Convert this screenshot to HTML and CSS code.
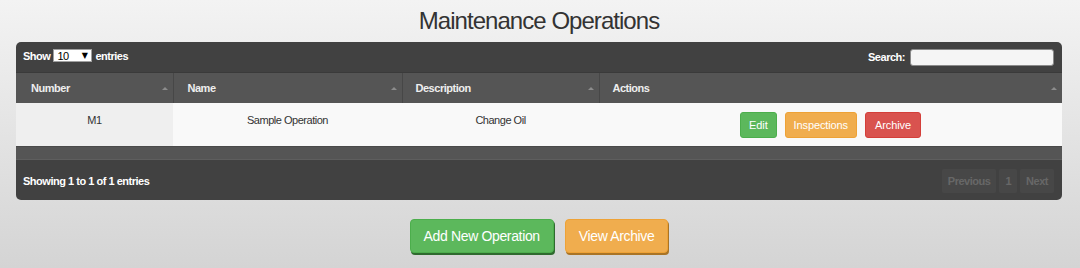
FILE: index.html
```html
<!DOCTYPE html>
<html lang="en">
<head>
<meta charset="utf-8">
<title>Maintenance Operations</title>
<link rel="stylesheet" href="styles.css">
</head>
<body>
<main class="page">
  <h1 class="title">Maintenance Operations</h1>
  <section class="panel">
    <div class="toolbar toolbar-top">
      <div class="length">Show <span class="select"><span>10</span><span class="caret">▼</span></span> entries</div>
      <label class="search">Search: <input type="text" class="search-input"></label>
    </div>
    <table class="grid">
      <colgroup>
        <col class="c1"><col class="c2"><col class="c3"><col class="c4">
      </colgroup>
      <thead>
        <tr>
          <th><span class="th-in">Number<i class="sort"></i></span></th>
          <th><span class="th-in">Name<i class="sort"></i></span></th>
          <th><span class="th-in">Description<i class="sort"></i></span></th>
          <th><span class="th-in">Actions<i class="sort"></i></span></th>
        </tr>
      </thead>
      <tbody>
        <tr>
          <td class="sorted">M1</td>
          <td>Sample Operation</td>
          <td>Change Oil</td>
          <td class="act">
            <div class="btn-row">
              <button class="btn btn-green">Edit</button>
              <button class="btn btn-orange">Inspections</button>
              <button class="btn btn-red">Archive</button>
            </div>
          </td>
        </tr>
      </tbody>
      <tfoot>
        <tr><td colspan="4" class="foot"></td></tr>
      </tfoot>
    </table>
    <div class="toolbar toolbar-bottom">
      <div class="info">Showing 1 to 1 of 1 entries</div>
      <div class="pager">
        <span class="pg">Previous</span>
        <span class="pg">1</span>
        <span class="pg">Next</span>
      </div>
    </div>
  </section>
  <div class="bottom-actions">
    <button class="big big-green">Add New Operation</button>
    <button class="big big-orange">View Archive</button>
  </div>
</main>
</body>
</html>
```

FILE: styles.css
```css
html, body {
  margin: 0;
  padding: 0;
}
body {
  width: 1080px;
  height: 268px;
  overflow: hidden;
  background: linear-gradient(#f3f3f3, #d4d4d4);
  font-family: "Liberation Sans", Arial, sans-serif;
  letter-spacing: -0.03em;
  color: #333;
}
.page {
  padding: 7px 18px 0 16px;
}
.title {
  margin: 0 0 7px;
  font-size: 24px;
  line-height: 28px;
  font-weight: normal;
  letter-spacing: -0.04em;
  text-align: center;
  color: #333;
}
.panel {
  background: #414141;
  border-radius: 5px;
}
.toolbar {
  display: flex;
  align-items: center;
  justify-content: space-between;
  color: #fff;
  font-size: 11px;
  font-weight: bold;
}
.toolbar-top {
  height: 30px;
  padding: 0 8px 0 7px;
  border-bottom: 1px solid #3a3a3a;
  border-radius: 5px 5px 0 0;
}
.length {
  display: flex;
  align-items: center;
  gap: 3px;
  margin-top: -3px;
}
.select {
  display: inline-flex;
  align-items: center;
  justify-content: space-between;
  box-sizing: border-box;
  width: 39px;
  height: 13px;
  padding: 0 4px 0 3px;
  background: #fff;
  border: 1px solid #a0a0a0;
  color: #000;
  font-weight: normal;
  font-size: 11px;
}
.caret {
  font-family: "DejaVu Sans", sans-serif;
  font-size: 8px;
}
.search {
  display: flex;
  align-items: center;
  gap: 5px;
}
.search-input {
  box-sizing: border-box;
  width: 144px;
  height: 17px;
  margin: 0;
  padding: 0 3px;
  border: 1px solid #8a8a8a;
  border-radius: 3px;
  background: #f5f5f5;
}
.grid {
  width: 100%;
  border-collapse: collapse;
  table-layout: fixed;
  font-size: 11px;
}
.c1 { width: 157px; }
.c2 { width: 229px; }
.c3 { width: 197px; }
.grid th {
  height: 30px;
  padding: 0 4px 0 15px;
  background: #555;
  color: #eee;
  text-align: left;
  font-weight: bold;
  border-left: 1px solid #474747;
  box-sizing: border-box;
}
.grid th:first-child { border-left: 0; padding-left: 15px; }
.grid th:nth-child(2) { padding-left: 14px; }
.grid th:nth-child(3) { padding-left: 13px; }
.grid th:nth-child(4) { padding-left: 13px; }
.th-in {
  display: flex;
  align-items: center;
  justify-content: space-between;
}
.sort {
  width: 0;
  height: 0;
  border-left: 3px solid transparent;
  border-right: 3px solid transparent;
  border-bottom: 3px solid #8c8c8c;
  margin-right: 1px;
}
.grid td {
  height: 43px;
  box-sizing: border-box;
  padding: 10px 8px 19px;
  line-height: 14px;
  vertical-align: top;
  text-align: center;
  background: #f9f9f9;
  color: #333;
}
.grid td.sorted {
  background: #efefef;
}
.grid td.act {
  padding: 9px 8px 8px;
}
.btn-row {
  display: flex;
  justify-content: center;
  gap: 8px;
}
.btn {
  height: 26px;
  margin: 0;
  padding: 0 8px;
  border-radius: 3px;
  border: 1px solid;
  color: #fff;
  font-family: "Liberation Sans", Arial, sans-serif;
  font-size: 11px;
  letter-spacing: -0.01em;
}
.btn-green { background: #5cb85c; border-color: #4cae4c; }
.btn-orange { background: #f0ad4e; border-color: #eea236; }
.btn-red { background: #d9534f; border-color: #d43f3a; padding: 0 9px; }
.grid td.foot {
  height: 13px;
  padding: 0;
  background: #555;
  border-top: 1px solid #4a4a4a;
  border-bottom: 1px solid #5e5e5e;
}
.toolbar-bottom {
  height: 40px;
  padding: 1px 8px 0 7px;
  box-sizing: border-box;
  border-radius: 0 0 5px 5px;
}
.pager {
  display: flex;
  gap: 3px;
}
.pg {
  display: flex;
  align-items: center;
  height: 24px;
  padding: 0 6px;
  background: #474747;
  color: #676767;
  border-radius: 2px;
}
.bottom-actions {
  display: flex;
  justify-content: center;
  gap: 11px;
  margin-top: 19px;
}
.big {
  height: 34px;
  margin: 0;
  padding: 0 13px;
  border-radius: 4px;
  border: 1px solid;
  color: #fff;
  font-family: "Liberation Sans", Arial, sans-serif;
  font-size: 14px;
  letter-spacing: -0.025em;
}
.big-green {
  background: #5cb85c;
  border-color: #4cae4c;
  box-shadow: 1px 2px 0 #2f6a2f;
}
.big-orange {
  background: #f0ad4e;
  border-color: #eea236;
  box-shadow: 1px 2px 0 #a97426;
}
```
